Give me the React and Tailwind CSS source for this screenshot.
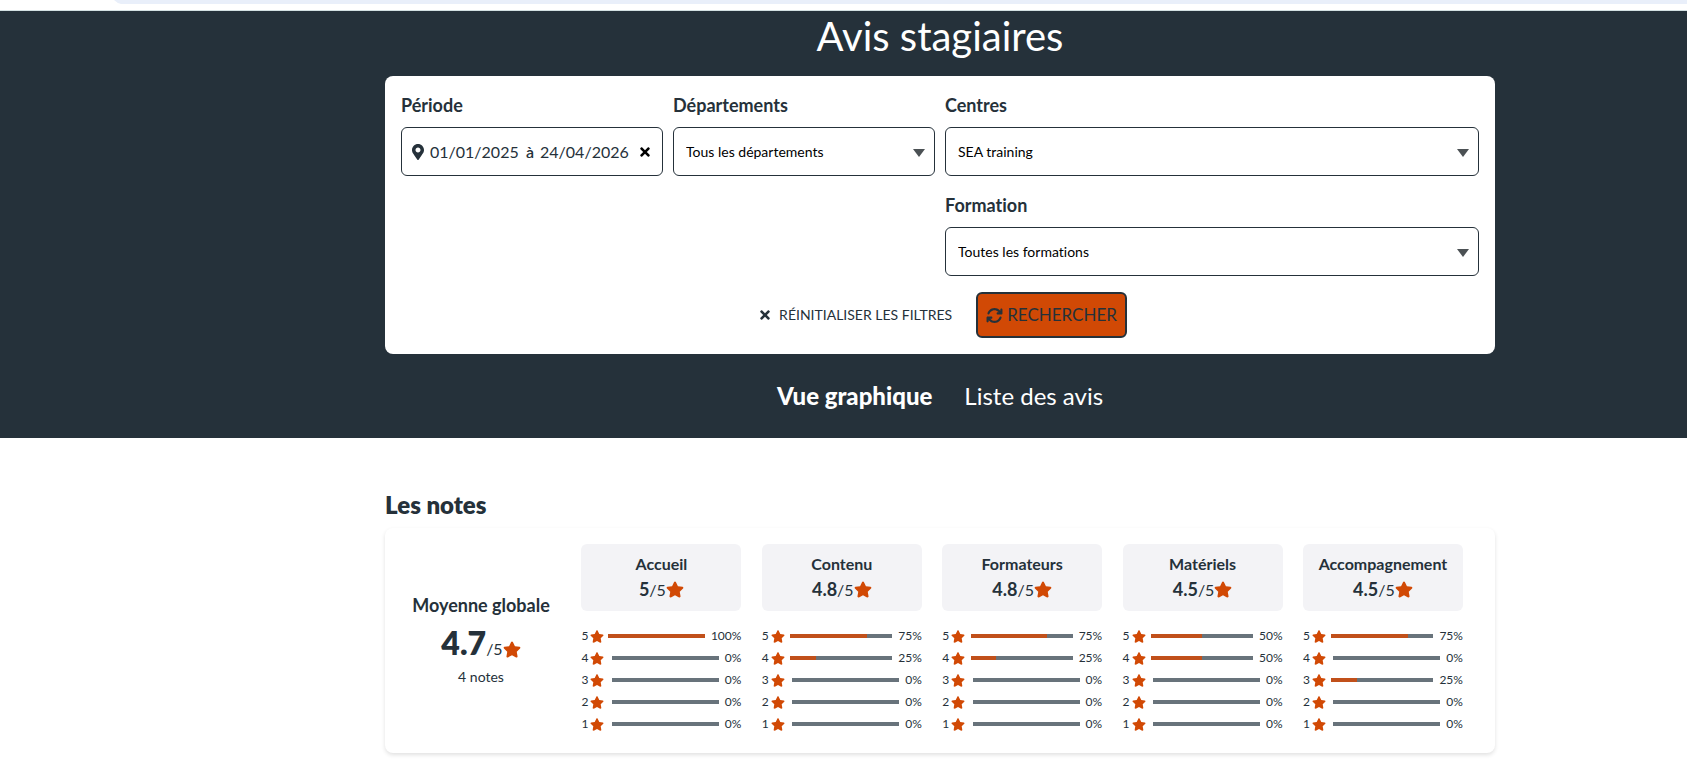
import { useState } from 'react'
import { FaMapMarkerAlt, FaStar, FaTimes } from 'react-icons/fa'
import { FaArrowsRotate } from 'react-icons/fa6'

const SCORES = [
  { label: 'Accueil', note: '5', repartition: [100, 0, 0, 0, 0] },
  { label: 'Contenu', note: '4.8', repartition: [75, 25, 0, 0, 0] },
  { label: 'Formateurs', note: '4.8', repartition: [75, 25, 0, 0, 0] },
  { label: 'Matériels', note: '4.5', repartition: [50, 50, 0, 0, 0] },
  { label: 'Accompagnement', note: '4.5', repartition: [75, 0, 25, 0, 0] },
]

function SelectField({ id, label, options, className }) {
  return (
    <div className={className}>
      <label htmlFor={id} className="block text-lg leading-6 font-bold">{label}</label>
      <div className="relative mt-2.5">
        <select id={id} className="block w-full h-[49px] pl-3 pr-9 appearance-none bg-white text-black text-sm border border-[#25313a] rounded-md">
          {options.map(o => <option key={o}>{o}</option>)}
        </select>
        <svg viewBox="0 0 12 8" className="absolute right-2.5 top-[22px] w-3 h-2 fill-[#4b5154] pointer-events-none"><path d="M0 0h12L6 8z" /></svg>
      </div>
    </div>
  )
}

function DateField() {
  const [debut, setDebut] = useState('01/01/2025')
  const [fin, setFin] = useState('24/04/2026')
  return (
    <div>
      <label htmlFor="debut" className="block text-lg leading-6 font-bold">Période</label>
      <div className="mt-2.5 h-[49px] pl-2.5 pr-[11px] flex items-center border border-[#25313a] rounded-md">
        <FaMapMarkerAlt className="w-3 h-4 shrink-0" />
        <input id="debut" value={debut} onChange={(e) => setDebut(e.target.value)} className="ml-1.5 w-[90px] text-base" />
        <span className="ml-1.5 font-semibold">à</span>
        <input aria-label="Date de fin" value={fin} onChange={(e) => setFin(e.target.value)} className="ml-1.5 w-[90px] text-base" />
        <button type="button" aria-label="Effacer" onClick={() => { setDebut(''); setFin('') }} className="ml-auto text-black"><FaTimes className="w-3 h-3.5" /></button>
      </div>
    </div>
  )
}

function RatingRow({ stars, percent }) {
  // the bar gives up room as the percentage gets longer
  const width = percent === 100 ? 'w-[97px]' : percent > 0 ? 'w-[102px]' : 'w-[107px]'
  return (
    <li className="flex items-center h-[22px] text-xs">
      <span className="w-[9px]">{stars}</span>
      <FaStar className="w-3.5 h-[13px] text-[#d14905]" />
      <div className={`${width} ml-auto mr-1.5 h-1 bg-[#68737b]`}>
        <div className="h-full bg-[#c1501a]" style={{ width: `${percent}%` }} />
      </div>
      <span>{percent}%</span>
    </li>
  )
}

function ScoreColumn({ score }) {
  return (
    <div className="w-40">
      <div className="h-[67px] pt-2 text-center bg-[#f3f3f6] rounded-md">
        <h3 className="text-base leading-6 font-bold">{score.label}</h3>
        <p className="flex justify-center items-baseline leading-6">
          <span className="text-lg leading-[26px] font-bold">{score.note}</span>
          <span>/5</span>
          <FaStar className="self-center w-[18px] h-[17px] text-[#d14905]" />
        </p>
      </div>
      <ul className="mt-3.5">
        {score.repartition.map((p, i) => <RatingRow key={i} stars={5 - i} percent={p} />)}
      </ul>
    </div>
  )
}

export default function App() {
  return (
    <div className="min-h-screen bg-white text-[#25313a] font-[Lato,sans-serif] [font-variant-ligatures:none]">
      <div className="h-[11px] border-b border-[#d3e0e2]">
        <svg className="block w-full h-1 fill-[#e9effa]"><path d="M114 0H4000V4H121Q117 3 114 0Z" /></svg>
      </div>

      <header className="pl-[193px] pb-[26px] bg-[#25313a]">
        <div className="max-w-[1110px] mx-auto">
          <h1 className="h-[65px] pt-[3px] text-center text-white text-[40px] leading-[44px]">Avis stagiaires</h1>

          <form onSubmit={(e) => e.preventDefault()} className="p-4 bg-white rounded-lg">
            <div className="pt-px grid grid-cols-4 gap-x-2.5 gap-y-[17px]">
              <DateField />
              <SelectField id="departements" label="Départements" options={['Tous les départements']} />
              <SelectField id="centres" label="Centres" options={['SEA training']} className="col-span-2" />
              <SelectField id="formation" label="Formation" options={['Toutes les formations']} className="col-span-2 col-start-3" />
            </div>
            <div className="mt-4 pl-1.5 flex justify-center items-center gap-6">
              <button type="reset" className="flex items-center gap-2 text-sm"><FaTimes className="w-3 h-3.5" />RÉINITIALISER LES FILTRES</button>
              <button type="submit" className="h-[46px] px-2 flex items-center gap-1 bg-[#d14905] border-2 border-[#25313a] rounded-md text-[17px]"><FaArrowsRotate className="w-[17px] h-[17px]" />RECHERCHER</button>
            </div>
          </form>

          <nav className="mt-[26px] flex justify-center gap-8 text-white text-2xl leading-8">
            <a href="#graphique" className="font-black">Vue graphique</a>
            <a href="#liste">Liste des avis</a>
          </nav>
        </div>
      </header>

      <main className="pl-[193px] pt-[51px]">
        <div className="max-w-[1110px] mx-auto">
          <h2 className="text-2xl leading-8 font-extrabold">Les notes</h2>
          <section className="mt-[7px] h-[225px] pl-4 pr-8 pt-4 flex justify-between bg-white rounded-lg shadow-[0_2px_4px_rgba(0,0,0,0.12)]">
            <div className="w-40 pt-[49px] text-center">
              <h3 className="text-lg leading-6 font-bold">Moyenne globale</h3>
              <p className="mt-1.5 flex justify-center items-baseline">
                <span className="text-[32px] leading-10 font-extrabold">4.7</span>
                <span>/5</span>
                <FaStar className="w-[18px] h-[17px] self-center mt-3 text-[#d14905]" />
              </p>
              <p className="mt-1 text-sm">4 notes</p>
            </div>
            {SCORES.map(s => <ScoreColumn key={s.label} score={s} />)}
          </section>
        </div>
      </main>
    </div>
  )
}
